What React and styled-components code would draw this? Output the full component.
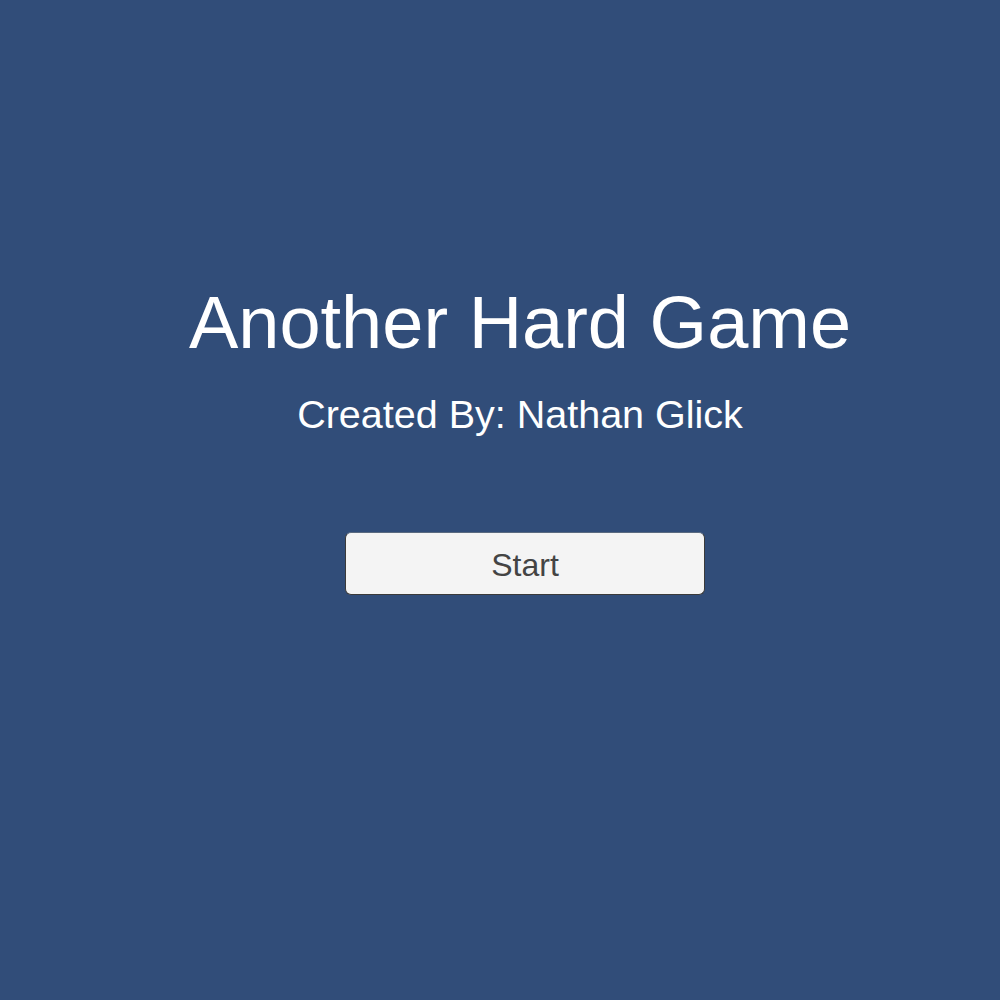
import styled, { createGlobalStyle } from "styled-components";

const GlobalStyle = createGlobalStyle`
    html, body {
        margin: 0;
        padding: 0;
        background: #314d79;
    }
`;

const Screen = styled.div`
    width: 1000px;
    height: 1000px;
    background: #314d79;
    display: flex;
    flex-direction: column;
    align-items: center;
    padding: 281px 0 0 40px;
    box-sizing: border-box;
    font-family: "Liberation Sans", Arial, sans-serif;
`;

const Title = styled.h1`
    margin: 0;
    font-size: 74px;
    font-weight: normal;
    line-height: 84px;
    color: #ffffff;
`;

const Subtitle = styled.h2`
    margin: 26px 0 0;
    font-size: 39.5px;
    font-weight: normal;
    line-height: 46px;
    color: #ffffff;
`;

const StartButton = styled.button`
    margin: 95px 0 0 10px;
    width: 360px;
    height: 63px;
    padding: 3px 0 0;
    background: #f4f4f4;
    border: 1px solid #3a3a3a;
    border-top-color: #5a6a80;
    border-radius: 6px;
    font-family: inherit;
    font-size: 32px;
    color: #444444;
    cursor: pointer;
`;

export default function App() {
    return (
        <>
            <GlobalStyle />
            <Screen>
                <Title>Another Hard Game</Title>
                <Subtitle>Created By: Nathan Glick</Subtitle>
                <StartButton>Start</StartButton>
            </Screen>
        </>
    );
}
